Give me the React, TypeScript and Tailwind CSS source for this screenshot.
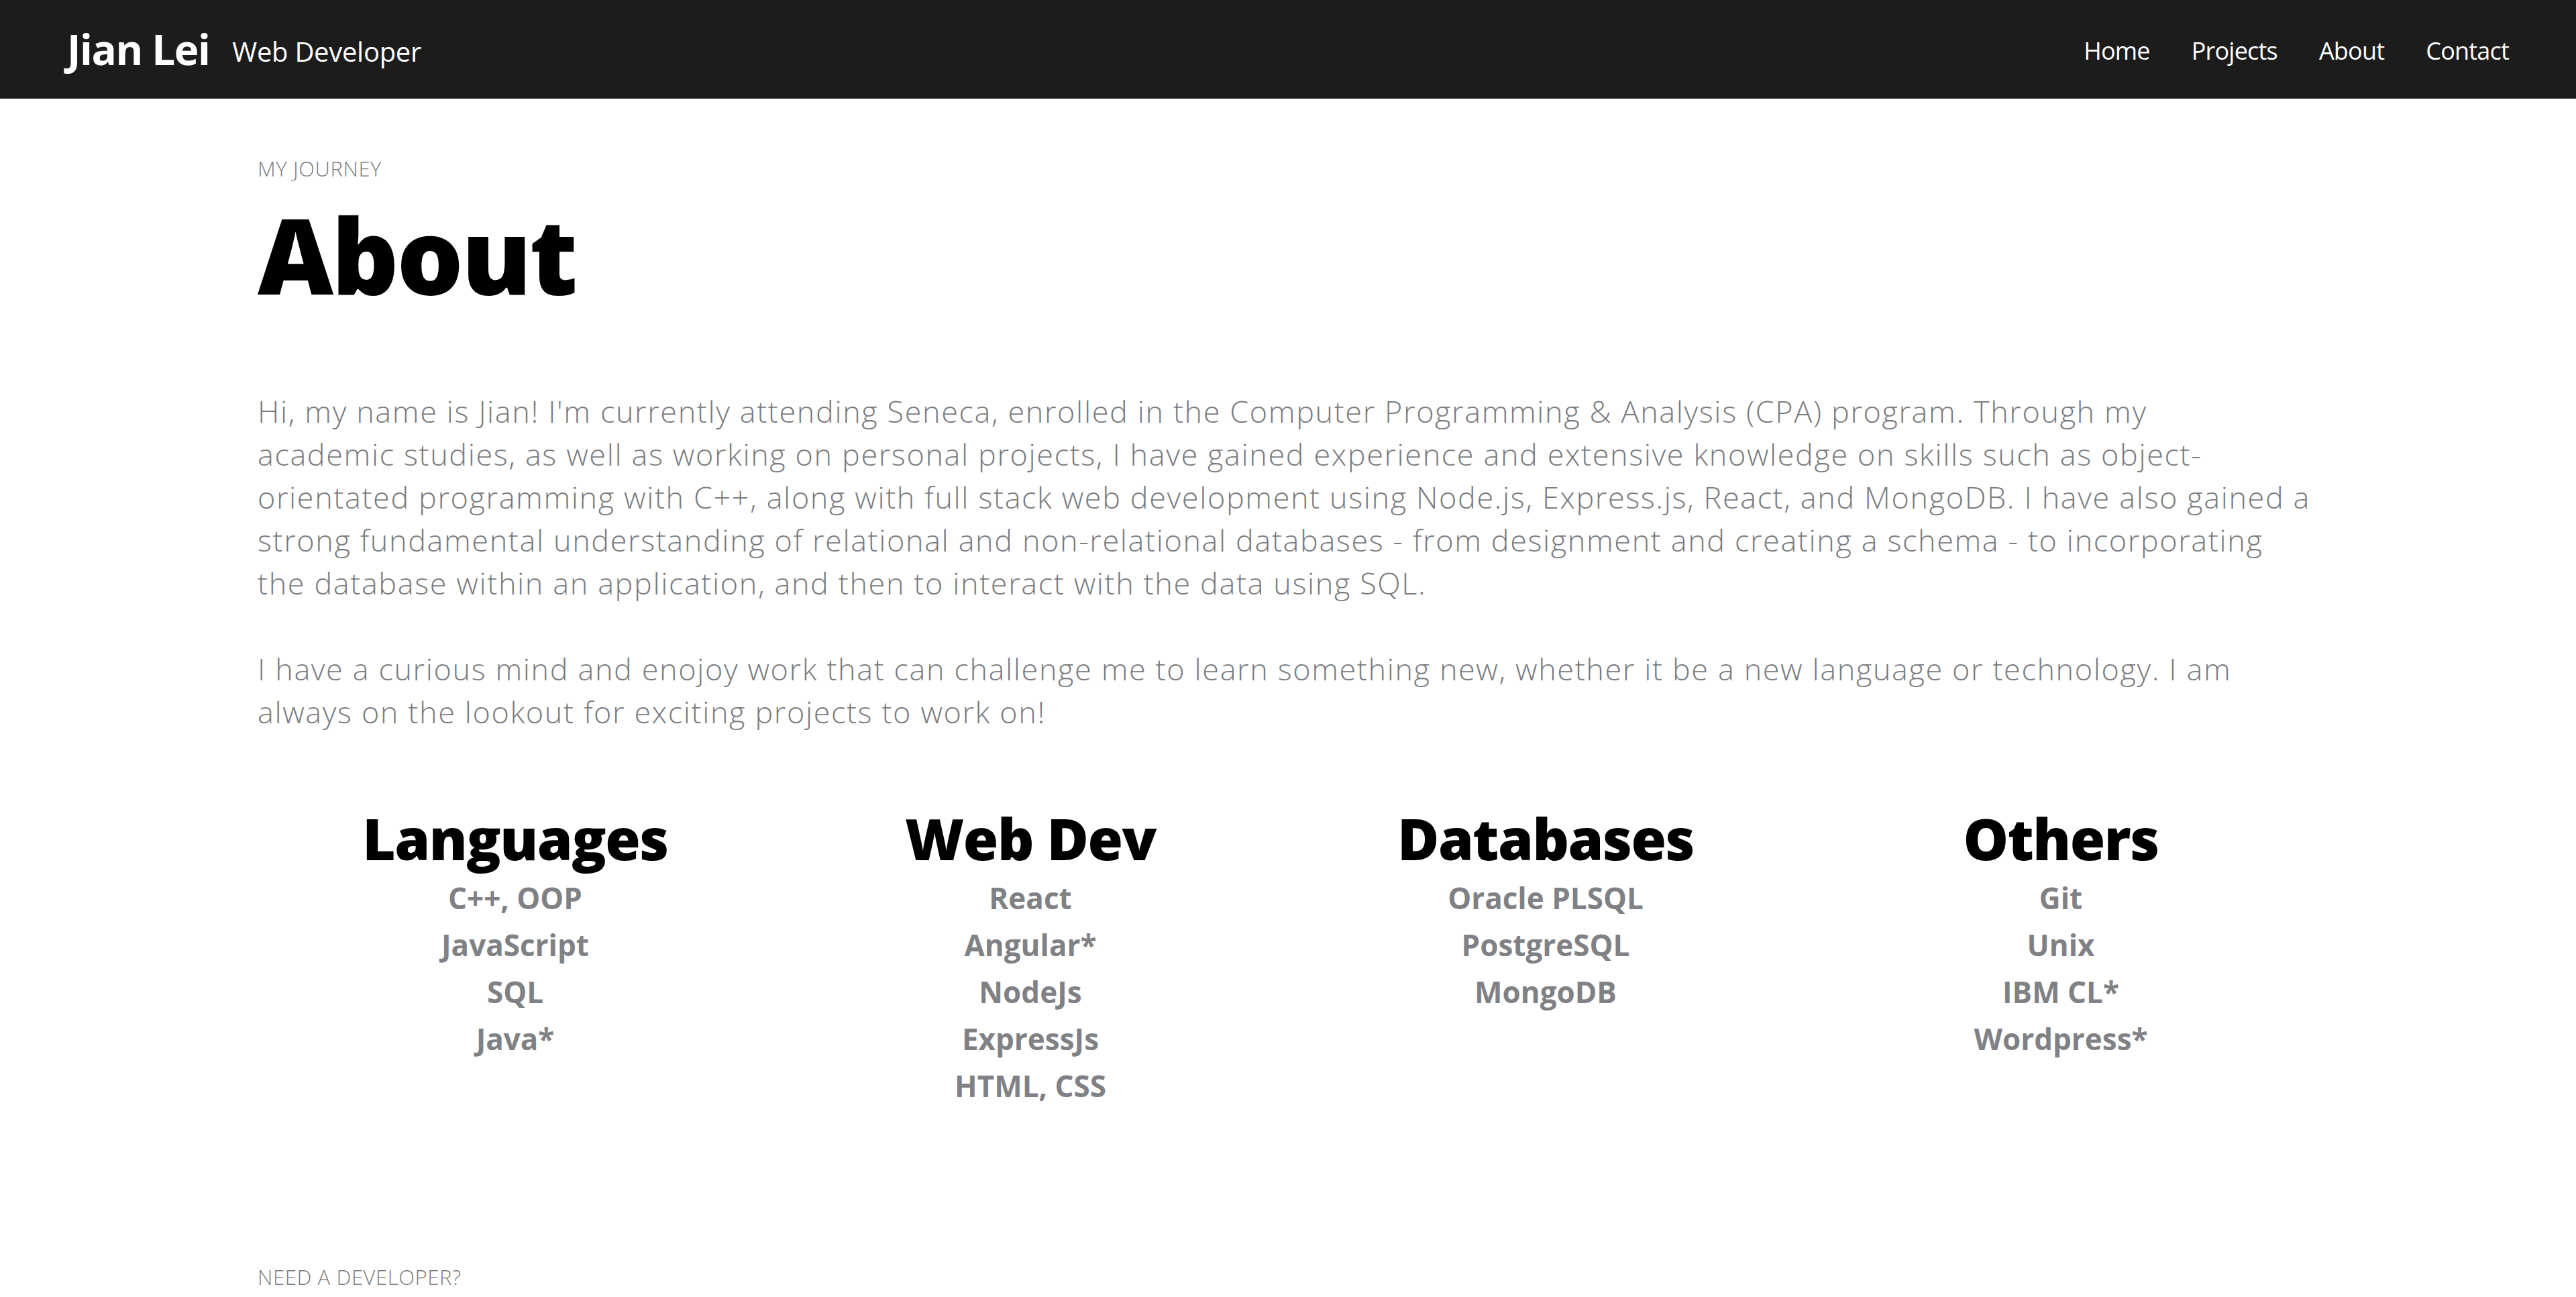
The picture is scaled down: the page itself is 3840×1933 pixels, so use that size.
const skills = [
  { title: "Languages", items: ["C++, OOP", "JavaScript", "SQL", "Java*"] },
  { title: "Web Dev", items: ["React", "Angular*", "NodeJs", "ExpressJs", "HTML, CSS"] },
  { title: "Databases", items: ["Oracle PLSQL", "PostgreSQL", "MongoDB"] },
  { title: "Others", items: ["Git", "Unix", "IBM CL*", "Wordpress*"] },
];

const navLinks = ["Home", "Projects", "About", "Contact"];

export default function App() {
  return (
    <div className="min-h-screen bg-white font-['Open_Sans',sans-serif]">
      {/* Navbar */}
      <header className="h-[147px] bg-[#1c1c1c] flex items-center justify-between px-[100px] text-white">
        <div className="flex items-center gap-[34px]">
          <span className="text-[62px] font-bold tracking-[-1.5px]">Jian Lei</span>
          <span className="pt-[6px] text-[40px] font-normal tracking-[-0.3px]">Web Developer</span>
        </div>
        <nav className="flex items-center gap-[62px] pt-[4px]">
          {navLinks.map((link) => (
            <a key={link} href="#" className="text-[36px] tracking-[-0.8px]">
              {link}
            </a>
          ))}
        </nav>
      </header>

      {/* About */}
      <main className="px-[384px]">
        <p className="pt-[86px] text-[31px] leading-[36px] font-light text-[#7a7c80] uppercase tracking-[0.6px]">
          My Journey
        </p>
        <h1 className="mt-[30px] text-[156px] leading-[160px] font-extrabold text-black tracking-[-3px]">
          About
        </h1>

        <div className="mt-[122px] text-[45px] leading-[64px] font-light text-[#7a7c80] tracking-[1.6px]">
          <p>
            Hi, my name is Jian! I'm currently attending Seneca, enrolled in the Computer Programming &amp;
            Analysis (CPA) program. Through my
            <br />
            academic studies, as well as working on personal projects, I have gained experience and extensive
            knowledge on skills such as object-
            <br />
            orientated programming with C++, along with full stack web development using Node.js, Express.js,
            React, and MongoDB. I have also gained a
            <br />
            strong fundamental understanding of relational and non-relational databases - from designment and
            creating a schema - to incorporating
            <br />
            the database within an application, and then to interact with the data using SQL.
          </p>
          <p className="mt-[64px]">
            I have a curious mind and enojoy work that can challenge me to learn something new, whether it be
            a new language or technology. I am always on the lookout for exciting projects to work on!
          </p>
        </div>

        {/* Skills */}
        <div className="mt-[106px] grid grid-cols-4">
          {skills.map((group) => (
            <div key={group.title} className="flex flex-col items-center">
              <h2 className="text-[85px] leading-[100px] font-extrabold text-black tracking-[-1.5px]">
                {group.title}
              </h2>
              <ul className="mt-[4px] flex flex-col items-center">
                {group.items.map((item) => (
                  <li key={item} className="text-[44px] leading-[70px] font-bold text-[#808185] tracking-[0px]">
                    {item}
                  </li>
                ))}
              </ul>
            </div>
          ))}
        </div>

        <p className="mt-[232px] text-[31px] leading-[36px] font-light text-[#7a7c80] uppercase tracking-[0.6px]">
          Need a developer?
        </p>
      </main>
    </div>
  );
}
